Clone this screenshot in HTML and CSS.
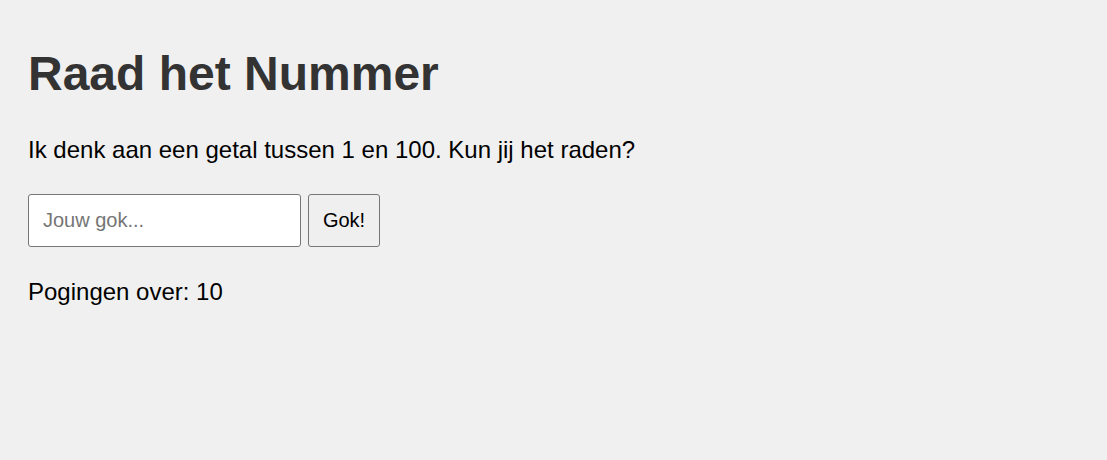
FILE: index.html
```html
<!DOCTYPE html>
<html lang="nl">
<head>
<meta charset="utf-8">
<title>Raad het Nummer</title>
<link rel="stylesheet" href="styles.css">
</head>
<body>
<div class="game">
  <h1 class="title">Raad het Nummer</h1>
  <p class="intro">Ik denk aan een getal tussen 1 en 100. Kun jij het raden?</p>
  <div class="controls">
    <input class="guess" type="text" placeholder="Jouw gok...">
    <button class="btn">Gok!</button>
  </div>
  <p class="attempts">Pogingen over: 10</p>
</div>
</body>
</html>
```
FILE: styles.css
```css
html, body {
  background: #f0f0f0;
}
body {
  margin: 8px;
  padding: 20px;
  font-family: "Liberation Sans", Arial, sans-serif;
  font-size: 24px;
  color: #000;
}
.title {
  font-size: 48px;
  color: #333;
  margin: 18px 0 0;
  font-weight: bold;
}
.intro {
  font-size: 24px;
  margin: 35px 0 0;
}
.controls {
  display: flex;
  gap: 7px;
  margin-top: 30px;
}
.guess {
  width: 273px;
  height: 53px;
  box-sizing: border-box;
  padding: 0 14px;
  font-size: 20px;
  font-family: "Liberation Sans", Arial, sans-serif;
  border: 1px solid #767676;
  border-radius: 3px;
  background: #fff;
}
.guess::placeholder {
  color: #757575;
}
.btn {
  width: 72px;
  height: 53px;
  box-sizing: border-box;
  padding: 0;
  font-size: 20px;
  font-family: "Liberation Sans", Arial, sans-serif;
  border: 1px solid #767676;
  border-radius: 3px;
  background: #efefef;
  color: #000;
}
.attempts {
  font-size: 24px;
  margin: 31px 0 0;
}
```
